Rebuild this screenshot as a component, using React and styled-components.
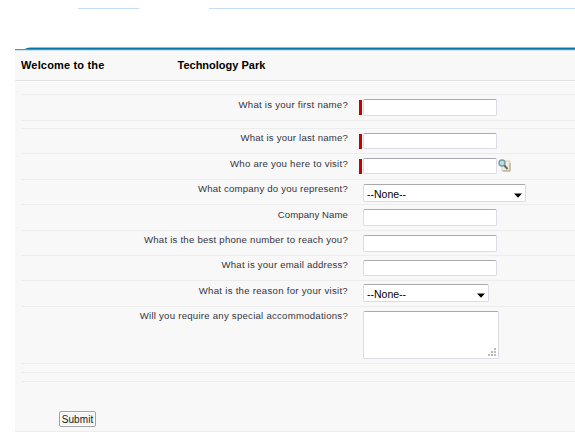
import React from "react";
import styled, { createGlobalStyle } from "styled-components";

const GlobalStyle = createGlobalStyle`
  * { box-sizing: border-box; }
  body { margin: 0; background: #fff; overflow: hidden; font-family: "Liberation Sans", Arial, sans-serif; }
`;

const Page = styled.div`
  width: 575px;
  height: 447px;
  background: #fff;
`;

const TopRules = styled.div`
  height: 47px;
  padding: 8px 0 0 78px;
  display: flex;
  gap: 70px;
`;

const TopRule = styled.div`
  height: 1px;
  background: #c4dcf4;
  ${(p) => (p.$width ? `width: ${p.$width}px;` : "flex: 1;")}
`;

const Panel = styled.main`
  margin-left: 15px;
  height: 385px;
  background: #f8f8f8;
  border-bottom: 1px solid #ececec;
`;

const Accent = styled.svg`
  display: block;
  width: 560px;
  height: 4px;
  background: #fff;
`;

const Heading = styled.h1`
  margin: 0;
  height: 30px;
  padding: 6px 0 0 6px;
  display: flex;
  border-bottom: 1px solid #e2e2e2;
  box-shadow: 0 1px 0 #fff;
  font-size: 11px;
  line-height: 16px;
  font-weight: bold;
  color: #000;
  white-space: nowrap;
`;

const HeadingPart = styled.span`
  width: ${(p) => p.$width}px;
  letter-spacing: ${(p) => p.$spacing}px;
`;

const Form = styled.form`
  margin: 0 0 0 7px;
`;

const Row = styled.div`
  height: ${(p) => p.$height}px;
  border-bottom: 1px solid #ececec;
  display: flex;
  align-items: flex-start;
`;

const Label = styled.label`
  width: 326px;
  padding-top: ${(p) => p.$top}px;
  text-align: right;
  font-size: 9.6px;
  line-height: 12px;
  letter-spacing: ${(p) => p.$spacing}px;
  color: #34343f;
  white-space: nowrap;
`;

const Control = styled.div`
  margin: ${(p) => p.$top}px 0 0 11px;
  display: flex;
  align-items: flex-start;
`;

const Required = styled.span`
  width: 3px;
  height: 15px;
  margin: 1px 1px 0 0;
  background: ${(p) => (p.$on ? "#c40000" : "transparent")};
`;

const TextInput = styled.input`
  width: 134px;
  height: ${(p) => p.$height}px;
  padding: 0 3px;
  border: 1px solid #d9dbe6;
  border-top-color: #a9a9ae;
  border-radius: 2px;
  background: #fff;
  outline: none;
`;

const Picker = styled.button`
  width: ${(p) => p.$width}px;
  height: 18px;
  padding: 1px 3px 0 3px;
  display: flex;
  align-items: center;
  justify-content: space-between;
  border: 1px solid #d9dbe6;
  border-top-color: #a9a9ae;
  border-radius: 2px;
  background: #fff;
  font: 10.5px "Liberation Sans", Arial, sans-serif;
  color: #000;
`;

const Arrow = styled.svg`
  width: 8px;
  height: 5px;
  margin-top: 3px;
`;

const Notes = styled.div`
  width: 136px;
  height: 48px;
  padding: 0 2px 2px 0;
  display: flex;
  align-items: flex-end;
  justify-content: flex-end;
  border: 1px solid #d9dbe6;
  border-top-color: #a9a9ae;
  border-radius: 2px;
  background: #fff;
`;

const Lookup = styled.svg`
  width: 15px;
  height: 15px;
`;

const Submit = styled.button`
  display: block;
  width: 37px;
  height: 16px;
  margin: 29px 0 0 37px;
  padding: 0;
  border: 1px solid #a2a2a2;
  border-radius: 2px;
  background: #f5f5f5;
  box-shadow: inset 0 0 0 1px #fff;
  font: 10px/13px "Liberation Sans", Arial, sans-serif;
  letter-spacing: 0.1px;
  color: #222;
`;

const rows = [
  { height: 14 },
  { height: 26, label: "What is your first name?", spacing: 0.25, labelTop: 4, top: 4, required: true, box: 17 },
  { height: 8 },
  { height: 25, label: "What is your last name?", spacing: 0.2, labelTop: 3, top: 4, required: true, box: 16 },
  { height: 26, label: "Who are you here to visit?", spacing: 0.25, labelTop: 4, top: 4, required: true, lookup: true, box: 16 },
  { height: 25, label: "What company do you represent?", spacing: 0.2, labelTop: 3, top: 4, select: 163 },
  { height: 26, label: "Company Name", spacing: 0.08, labelTop: 4, top: 4, box: 17 },
  { height: 25, label: "What is the best phone number to reach you?", spacing: 0.23, labelTop: 3, top: 4, box: 17 },
  { height: 25, label: "What is your email address?", spacing: 0.2, labelTop: 3, top: 4, box: 16 },
  { height: 26, label: "What is the reason for your visit?", spacing: 0.28, labelTop: 4, top: 3, select: 126 },
  { height: 57, label: "Will you require any special accommodations?", spacing: 0.25, labelTop: 3, top: 4, notes: true },
  { height: 9 },
  { height: 9 },
];

function Field({ row }) {
  if (row.select)
    return (
      <Picker type="button" $width={row.select}>
        <span>--None--</span>
        <Arrow viewBox="0 0 8 5"><path d="M0 0.5H8L4 4.8Z" fill="#000" /></Arrow>
      </Picker>
    );
  if (row.notes)
    return (
      <Notes>
        <svg width="8" height="8" viewBox="0 0 8 8" fill="#bbb">
          <path d="M6 0h2v2H6zM3 3h2v2H3zM6 3h2v2H6zM0 6h2v2H0zM3 6h2v2H3zM6 6h2v2H6z" />
        </svg>
      </Notes>
    );
  return <TextInput $height={row.box} aria-label={row.label} />;
}

export default function App() {
  return (
    <Page>
      <GlobalStyle />
      <TopRules>
        <TopRule $width={61} />
        <TopRule />
      </TopRules>
      <Panel>
        <Accent viewBox="0 0 560 4">
          <path d="M15 0H560V1H12Z" fill="#8dbfd2" />
          <path d="M12 1H560V2H10Z" fill="#0774a6" />
          <path d="M0 2H560V3H0Z" fill="#3c9bbd" />
          <path d="M0 3H560V4H0Z" fill="#d0e5ed" />
        </Accent>
        <Heading>
          <HeadingPart $width={156.5} $spacing={0.17}>Welcome to the</HeadingPart>
          <HeadingPart $width={110} $spacing={0}>Technology Park</HeadingPart>
        </Heading>
        <Form onSubmit={(e) => e.preventDefault()}>
          {rows.map((row, i) => (
            <Row key={i} $height={row.height}>
              {row.label && (
                <>
                  <Label $top={row.labelTop} $spacing={row.spacing}>{row.label}</Label>
                  <Control $top={row.top}>
                    <Required $on={row.required} />
                    <Field row={row} />
                    {row.lookup && (
                      <Lookup viewBox="0 0 15 15">
                        <path d="M6 3H13V13H5V9Z" fill="#f4edd5" stroke="#d5cfbb" />
                        <path d="M13 5V13H6" fill="none" stroke="#aaa58f" />
                        <circle cx="5" cy="5" r="3" fill="#b9dce5" stroke="#7c9ba6" strokeWidth="1.4" />
                        <path d="M7.3 7.3L10.5 11" stroke="#5b676c" strokeWidth="2" />
                      </Lookup>
                    )}
                  </Control>
                </>
              )}
            </Row>
          ))}
          <Submit type="submit">Submit</Submit>
        </Form>
      </Panel>
    </Page>
  );
}
